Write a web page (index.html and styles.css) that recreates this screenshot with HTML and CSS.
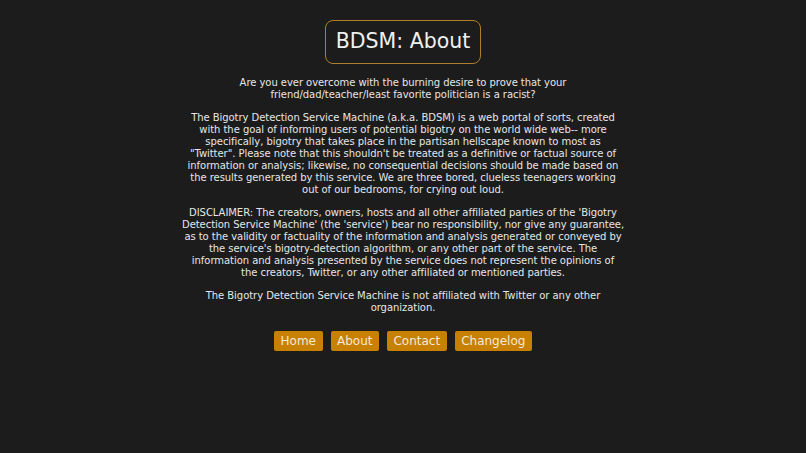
FILE: index.html
```html
<!DOCTYPE html>
<html>
<head>
<meta charset="utf-8">
<link rel="stylesheet" href="styles.css">
</head>
<body>
<main class="page">
  <h1 class="title">BDSM: About</h1>
  <div class="text">
    <p>Are you ever overcome with the burning desire to prove that your<br>friend/dad/teacher/least favorite politician is a racist?</p>
    <p>The Bigotry Detection Service Machine (a.k.a. BDSM) is a web portal of sorts, created<br>with the goal of informing users of potential bigotry on the world wide web-- more<br>specifically, bigotry that takes place in the partisan hellscape known to most as<br>"Twitter". Please note that this shouldn't be treated as a definitive or factual source of<br>information or analysis; likewise, no consequential decisions should be made based on<br>the results generated by this service. We are three bored, clueless teenagers working<br>out of our bedrooms, for crying out loud.</p>
    <p>DISCLAIMER: The creators, owners, hosts and all other affiliated parties of the 'Bigotry<br>Detection Service Machine' (the 'service') bear no responsibility, nor give any guarantee,<br>as to the validity or factuality of the information and analysis generated or conveyed by<br>the service's bigotry-detection algorithm, or any other part of the service. The<br>information and analysis presented by the service does not represent the opinions of<br>the creators, Twitter, or any other affiliated or mentioned parties.</p>
    <p>The Bigotry Detection Service Machine is not affiliated with Twitter or any other<br>organization.</p>
  </div>
  <nav class="nav">
    <a class="btn" href="#">Home</a>
    <a class="btn" href="#">About</a>
    <a class="btn" href="#">Contact</a>
    <a class="btn" href="#">Changelog</a>
  </nav>
</main>
</body>
</html>
```
FILE: styles.css
```css
html, body {
  margin: 0;
  padding: 0;
  background: #1c1c1c;
}
body {
  font-family: "DejaVu Sans", sans-serif;
  color: #e6e6e6;
}
.page {
  display: flex;
  flex-direction: column;
  align-items: center;
  padding-top: 20px;
}
.title {
  margin: 0;
  font-size: 20.5px;
  font-weight: normal;
  color: #f0f0f0;
  border: 1px solid #b07e2a;
  border-radius: 8px;
  padding: 8px 10px 9px;
  line-height: 25px;
}
.text {
  width: 520px;
  margin-top: 13px;
  text-align: center;
  font-size: 10px;
  letter-spacing: -0.05px;
  line-height: 12px;
  white-space: nowrap;
}
.text p {
  margin: 0 0 11px;
}
.nav {
  display: flex;
  gap: 8px;
  margin-top: 6px;
}
.btn {
  background: #c88000;
  color: #f3ead8;
  text-decoration: none;
  font-size: 12px;
  line-height: 20px;
  padding: 0 6.5px;
  border-radius: 2px;
}
```
